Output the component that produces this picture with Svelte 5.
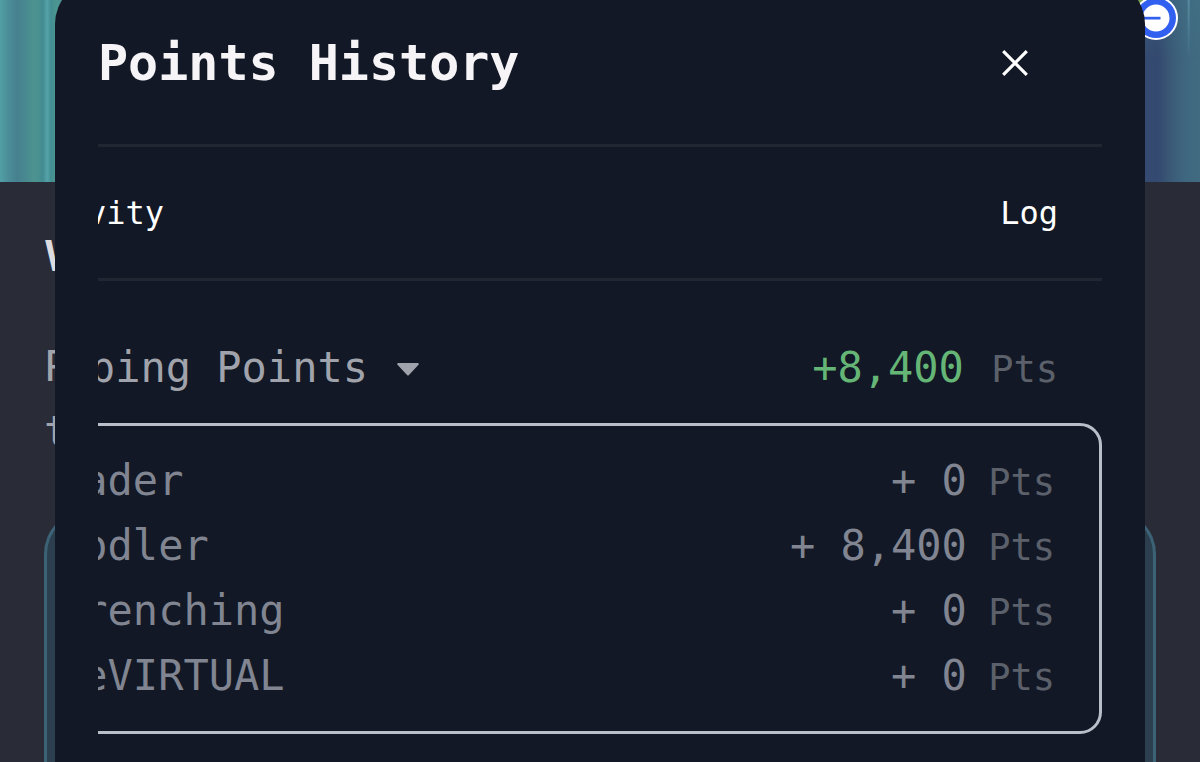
<script>
  let open = $state(true);
  const rows = [
    { name: 'Vader', points: '0' },
    { name: 'Hodler', points: '8,400' },
    { name: 'Trenching', points: '0' },
    { name: 'veVIRTUAL', points: '0' }
  ];
</script>

<div class="screen">
  <main class="page">
    <div class="hero">
      <svg class="badge" width="52" height="44" viewBox="0 0 52 44" aria-hidden="true">
        <circle cx="14" cy="-8" r="16" fill="#76a050" />
        <circle cx="30" cy="22" r="22" fill="#fff" />
        <circle cx="30" cy="22" r="20" fill="#315ff0" />
        <circle cx="30" cy="22" r="13.5" fill="#fff" />
        <rect x="14" y="20.8" width="20.5" height="2.7" fill="#315ff0" />
      </svg>
    </div>
    <div class="body">
      <h2>V</h2>
      <p>P<br />t</p>
      <div class="card"></div>
    </div>
  </main>

  <div class="modal" role="dialog" aria-labelledby="title">
    <header>
      <h1 id="title">Points History</h1>
      <button class="close" aria-label="Close">
        <svg width="26" height="26" viewBox="0 0 26 26" fill="none" stroke="#fff" stroke-width="3.2">
          <path d="M1.2 1.2 24.8 24.8M24.8 1.2 1.2 24.8" />
        </svg>
      </button>
    </header>
    <div class="clip">
      <div class="content">
        <div class="columns"><span>Activity</span><span>Log</span></div>
        <button class="total" aria-expanded={open} onclick={() => (open = !open)}>
          <span class="label">
            Yapping Points
            <svg width="24" height="18" viewBox="0 0 24 18" aria-hidden="true">
              <path d="M2.2 5H21.8L12 15.5Z" fill="#a0a3ab" stroke="#a0a3ab" stroke-width="2" stroke-linejoin="round" />
            </svg>
          </span>
          <span class="sum">+8,400 <small>Pts</small></span>
        </button>
        {#if open}
          <div class="box">
            <table>
              <tbody>
                {#each rows as row}
                  <tr>
                    <th scope="row">{row.name}</th>
                    <td>+ {row.points} <small>Pts</small></td>
                  </tr>
                {/each}
              </tbody>
            </table>
          </div>
        {/if}
      </div>
    </div>
  </div>
</div>

<style>
  :global(body) {
    margin: 0;
    background: #292c37;
  }
  .screen {
    display: grid;
    height: 100vh;
    overflow: hidden;
    font-family: 'DejaVu Sans Mono', monospace;
    font-size: 42px;
  }
  .page,
  .modal {
    grid-area: 1 / 1;
    min-width: 0;
  }
  .page {
    display: flex;
    flex-direction: column;
    background: #292c37;
  }
  .hero {
    position: relative;
    flex: none;
    height: 182px;
    background:
      linear-gradient(90deg, #51a0a5 0, #4b8e98 8px, #478090 17px, #488990 26px, #4d9390 34px, #438c91 43px, #55a3aa 47px, #438e91 51px, #4c9590 56px, #4c8d9c 70px, transparent 90px),
      linear-gradient(270deg, #406b80 0, #3f6880 14px, #3b5b78 28px, #34496f 42px, #354a70 56px);
  }
  .hero::after {
    content: '';
    position: absolute;
    inset: 0;
    background:
      linear-gradient(270deg, transparent 10px, #5f95a5 11px, transparent 13px),
      linear-gradient(270deg, rgba(70, 120, 140, 0.3), rgba(60, 110, 130, 0.4) 56px, transparent 80px);
    mask-image: linear-gradient(#000, transparent 60px);
  }
  .badge {
    position: absolute;
    z-index: 1;
    top: -4px;
    right: 22px;
  }
  .body {
    flex: 1;
    display: flex;
    flex-direction: column;
    padding: 42px 44px 0;
  }
  h2 {
    margin: 0;
    font-size: 42px;
    line-height: 66px;
    color: #dcdce0;
  }
  p {
    margin: 44px 0 46px;
    line-height: 65px;
    color: #a2a4ac;
  }
  .card {
    flex: 1;
    border: 3px solid #3c6276;
    border-bottom: 0;
    border-radius: 44px 44px 0 0;
    background: #2c3f4e;
  }
  .modal {
    z-index: 2;
    margin: -20px 55px 0;
    padding: 20px 43px 0;
    border-radius: 44px 44px 0 0;
    background: #121825;
    color: #fff;
  }
  header {
    display: flex;
    align-items: center;
    justify-content: space-between;
    height: 126px;
    padding: 0 74px 18px 0;
    border-bottom: 3px solid #202632;
  }
  h1 {
    margin: 0;
    font-size: 50px;
    line-height: 64px;
    color: #f6f4f7;
  }
  button {
    border: 0;
    padding: 0;
    background: none;
    font: inherit;
    cursor: pointer;
  }
  .close {
    display: flex;
  }
  .clip {
    overflow: hidden;
  }
  .content {
    margin-left: -88px;
  }
  .columns {
    display: flex;
    justify-content: space-between;
    padding: 34px 44px 33px 0;
    border-bottom: 3px solid #202632;
    font-size: 32px;
    line-height: 64px;
  }
  .total {
    display: flex;
    align-items: center;
    justify-content: space-between;
    width: 100%;
    padding: 55px 44px 23px 4px;
    line-height: 64px;
  }
  .label {
    display: flex;
    align-items: center;
    gap: 28px;
    color: #a0a3ab;
  }
  .sum {
    color: #65b676;
  }
  small {
    margin-left: -4px;
    font-size: 37px;
    line-height: 1;
    color: #5b606b;
  }
  .sum small {
    margin-left: 2px;
  }
  .box {
    padding: 22px 44px 23px;
    border: 3px solid #b9bec9;
    border-radius: 22px;
  }
  table {
    width: 100%;
    border-collapse: collapse;
    line-height: 64px;
    color: #808591;
  }
  th,
  td {
    height: 65px;
    padding: 0;
    font-weight: 400;
    text-align: left;
  }
  td {
    text-align: right;
  }
</style>
